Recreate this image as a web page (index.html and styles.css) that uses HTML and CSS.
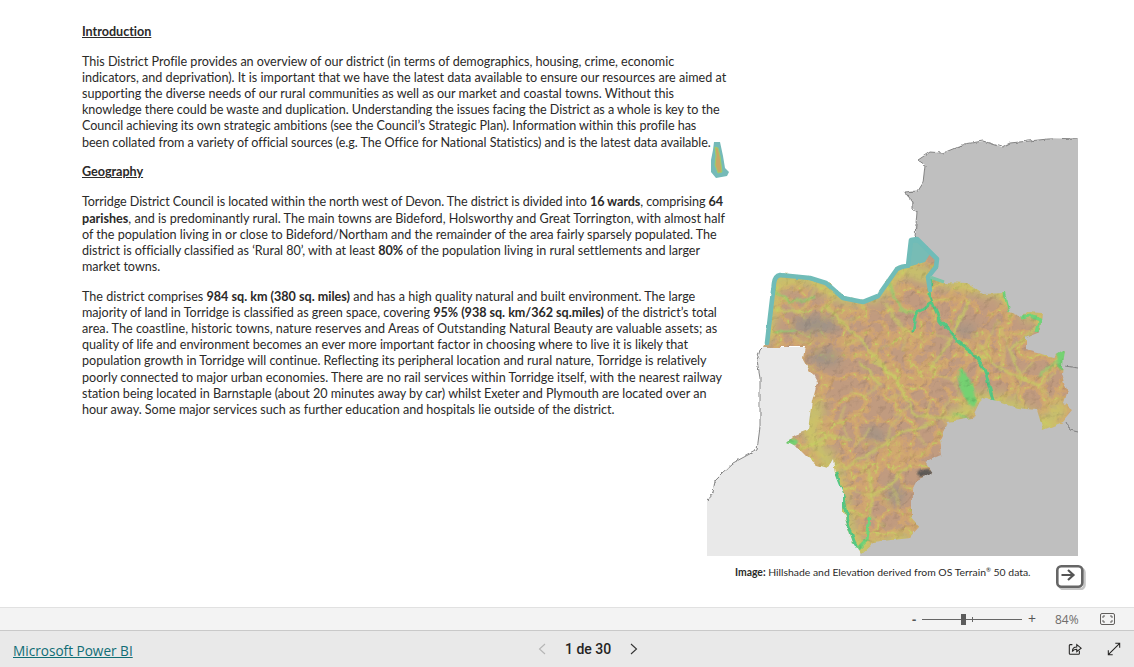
FILE: index.html
```html
<!DOCTYPE html>
<html lang="en">
<head>
<meta charset="utf-8">
<title>Torridge District Profile</title>
<link rel="stylesheet" href="styles.css">
</head>
<body>
<div class="app">
  <main class="canvas">
    <article class="copy">
      <h2 class="heading">Introduction</h2>
      <p class="para">This District Profile provides an overview of our district (in terms of demographics, housing, crime, economic<br>
      <span class="loose-sm">indicators, and deprivation). It is important that we have the latest data available to ensure our resources are aimed at</span><br>
      supporting the diverse needs of our rural communities as well as our market and coastal towns. Without this<br>
      <span class="tight">knowledge there could be waste and duplication. Understanding the issues facing the District as a whole is key to the</span><br>
      <span class="tight">Council achieving its own strategic ambitions (see the Council’s Strategic Plan). Information within this profile has</span><br>
      <span class="tight">been collated from a variety of official sources (e.g. The Office for National Statistics) and is the latest data available.</span></p>
      <h2 class="heading">Geography</h2>
      <p class="para"><span class="tight-lg">Torridge District Council is located within the north west of Devon. The district is divided into <b>16 wards</b>, comprising <b>64</b></span><br>
      <span class="loose-sm"><b>parishes</b>, and is predominantly rural. The main towns are Bideford, Holsworthy and Great Torrington, with almost half</span><br>
      of the population living in or close to Bideford/Northam and the remainder of the area fairly sparsely populated. The<br>
      district is officially classified as ‘Rural 80’, with at least <b>80%</b> of the population living in rural settlements and larger<br>
      market towns.</p>
      <p class="para"><span class="loose-sm">The district comprises <b>984 sq. km (380 sq. miles)</b> and has a high quality natural and built environment. The large</span><br>
      majority of land in Torridge is classified as green space, covering <b>95% (938 sq. km/362 sq.miles)</b> of the district’s total<br>
      <span class="loose">area. The coastline, historic towns, nature reserves and Areas of Outstanding Natural Beauty are valuable assets; as</span><br>
      quality of life and environment becomes an ever more important factor in choosing where to live it is likely that<br>
      population growth in Torridge will continue. Reflecting its peripheral location and rural nature, Torridge is relatively<br>
      <span class="loose-sm">poorly connected to major urban economies. There are no rail services within Torridge itself, with the nearest railway</span><br>
      station being located in Barnstaple (about 20 minutes away by car) whilst Exeter and Plymouth are located over an<br>
      hour away. Some major services such as further education and hospitals lie outside of the district.</p>
    </article>
    <figure class="figure">
      <svg class="map" viewBox="707 138 371 418" role="img" aria-label="Hillshade and elevation map of Torridge">
        <defs>
          <filter id="relief" x="0" y="0" width="100%" height="100%" color-interpolation-filters="sRGB">
            <feTurbulence type="fractalNoise" baseFrequency="0.12" numOctaves="4" seed="7"/>
            <feDiffuseLighting surfaceScale="1.6" diffuseConstant="1.16" lighting-color="#ffffff">
              <feDistantLight azimuth="225" elevation="62"/>
            </feDiffuseLighting>
          </filter>
          <filter id="elev" x="0" y="0" width="100%" height="100%" color-interpolation-filters="sRGB">
            <feTurbulence type="turbulence" baseFrequency="0.045" numOctaves="5" seed="12"/>
            <feColorMatrix values="0 0 0 2.5 0  0 0 0 2.5 0  0 0 0 2.5 0  0 0 0 0 1"/>
            <feComponentTransfer>
              <feFuncR type="table" tableValues="0.74 0.78 0.80 0.82 0.82 0.82 0.81 0.80 0.76"/>
              <feFuncG type="table" tableValues="0.82 0.80 0.74 0.68 0.66 0.65 0.64 0.63 0.61"/>
              <feFuncB type="table" tableValues="0.40 0.40 0.41 0.43 0.44 0.44 0.45 0.47 0.50"/>
            </feComponentTransfer>
          </filter>
          <filter id="rough" x="-5%" y="-5%" width="110%" height="110%">
            <feTurbulence type="fractalNoise" baseFrequency="0.09" numOctaves="3" seed="4" result="n"/>
            <feDisplacementMap in="SourceGraphic" in2="n" scale="6" xChannelSelector="R" yChannelSelector="G"/>
          </filter>
          <filter id="rough2" x="-5%" y="-5%" width="110%" height="110%">
            <feTurbulence type="fractalNoise" baseFrequency="0.14" numOctaves="3" seed="9" result="n"/>
            <feDisplacementMap in="SourceGraphic" in2="n" scale="3.5" xChannelSelector="R" yChannelSelector="G"/>
          </filter>
          <filter id="rough3" x="-5%" y="-5%" width="110%" height="110%">
            <feTurbulence type="fractalNoise" baseFrequency="0.08" numOctaves="2" seed="3" result="n"/>
            <feDisplacementMap in="SourceGraphic" in2="n" scale="2" xChannelSelector="R" yChannelSelector="G"/>
            <feGaussianBlur stdDeviation="0.5"/>
          </filter>
          <filter id="soft"><feGaussianBlur stdDeviation="6"/></filter>
          <filter id="soft2"><feGaussianBlur stdDeviation="0.9"/></filter>
          <filter id="soft1"><feGaussianBlur stdDeviation="0.5"/></filter>
          <clipPath id="land"><path d="M765 343L770 317L773 280L778 274L810 277L827 282L843 297L863 301L877 295L897 267L908 265L911 238L917 238L930 252L938 258L937 267L930 277L943 282L967 283L983 293L1005 292L1010 313L1022 318L1027 312L1042 313L1040 332L1025 338L1025 350L1053 357L1065 350L1062 373L1067 390L1063 403L1073 410L1063 422L1043 430L1037 410L1017 408L993 400L982 397L972 418L948 422L940 438L942 455L925 462L932 473L917 480L912 490L912 517L920 527L910 538L873 542L860 554L853 543L843 513L843 493L835 473L833 460L828 468L817 465L807 457L800 450L787 443L795 435L808 430L812 400L817 382L803 357L805 347L763 347Z"/></clipPath>
        </defs>
        <path class="sea-land" d="M707 500L713 493L715 480L722 473L733 463L757 450L760 427L760 377L757 360L760 350L763 347L860 347L870 556L707 556Z"/>
        <path class="grey-land" d="M1078 138L1048 139L1010 143L1002 147L983 141L965 144L943 153L930 152L918 160L925 165L923 183L918 191L904 192L912 202L912 208L917 212L915 237L930 265L880 400L860 556L1078 556Z"/>
        <g filter="url(#rough2)">
          <path class="grey-edge" d="M1078 138L1048 139L1010 143L1002 147L983 141L965 144L943 153L930 152L918 160L925 165L923 183L918 191L904 192L912 202L912 208L917 212L915 237L928 250"/>
          <path class="grey-edge" d="M707 500L713 493L715 480L722 473L733 463L757 450L760 427L760 377L757 360L760 350L763 347"/>
          <path class="grey-edge" d="M1065 366L1078 368M1066 422L1070 430L1078 432"/>
        </g>
        <g filter="url(#rough)">
          <g clip-path="url(#land)">
            <rect x="707" y="230" width="371" height="330" filter="url(#elev)"/>
            <g filter="url(#soft)">
              <path class="edge-y" d="M765 343L773 280L810 277L843 297L877 295L900 267L930 277L967 283L1005 292L1040 320M1063 403L1043 430L1017 408L982 397L948 422M820 400L808 430L835 473L843 513L860 554L910 538"/>
              <ellipse class="rock" cx="815" cy="325" rx="24" ry="9"/>
              <ellipse class="rock" cx="825" cy="358" rx="16" ry="8"/>
              <ellipse class="rock" cx="875" cy="435" rx="12" ry="6"/>
              <ellipse class="rock" cx="895" cy="495" rx="8" ry="11"/>
              <ellipse class="rock" cx="965" cy="330" rx="12" ry="5"/>
            </g>
            <g filter="url(#soft2)">
              <path class="val-y" d="M873 360L897 380L910 407L917 417L953 418L968 412M825 305L860 340L897 380M860 362L880 385M980 345L1000 370L1040 385M775 310L800 312M843 470L870 453L900 433L933 423M873 497L890 483L910 465M870 517L873 497L868 470M885 305L905 330M970 300L950 340L930 370M1040 325L1010 350L1020 375M800 450L830 435L850 440"/>
              <path class="val-fine" d="M897 380L885 372M905 395L890 398M910 407L895 415M925 418L930 400M940 418L950 398M860 340L845 345M875 352L890 345M842 322L860 318M880 385L865 395L850 392M850 440L840 420L845 405M855 445L870 430M885 440L900 415M915 430L925 445M870 453L860 475M890 483L900 505M873 497L855 490M870 517L885 525M870 517L852 515M1000 370L1005 345M1020 380L1015 400M1040 385L1050 400M1040 385L1055 372M1010 350L1000 330M1020 375L1035 362M950 340L960 315M950 340L935 335M975 360L1000 320M905 330L905 350M905 330L925 340M790 305L805 320M800 312L815 290M790 335L810 345M820 310L835 300M925 300L950 300M960 400L955 380L935 375"/>
              <path class="val-g" d="M775 332L795 330M775 290L790 302L815 297M890 285L900 310L917 313M1058 360L1040 375M970 420L955 415"/>
              <ellipse class="val-gf" cx="967" cy="388" rx="6" ry="20" transform="rotate(-22 967 388)"/>
              <ellipse class="val-gf" cx="790" cy="443" rx="7" ry="4"/>
              <ellipse class="val-gf" cx="1062" cy="358" rx="5" ry="11"/>
            </g>
            <g filter="url(#soft1)">
              <path class="river" d="M930 277L929 295L940 320L957 340L972 352L982 365L987 378L993 400M930 303L917 313L913 330M837 473L843 497L847 520L857 550"/>
              <path class="river-thin" d="M870 517L867 540L857 550M1005 292L1010 313M1022 318L1030 316L1040 320L1037 332"/>
            </g>
            <ellipse class="dark" cx="925" cy="473" rx="8" ry="4" filter="url(#soft2)" transform="rotate(-12 925 473)"/>
            <rect class="texture" x="707" y="230" width="371" height="330" filter="url(#relief)"/>
          </g>
        </g>
        <g filter="url(#rough3)">
          <path class="estuary" d="M911 240L918 240L930 254L925 262L908 267Z"/>
          <path class="coast" d="M767 343L770 317L774 283Q775 276 780 275L810 278L826 283L843 298L863 302L878 296L897 269Q902 266 908 266L911 240L917 239L930 252L937 259L936 267L928 277L930 290"/>
          <path class="coast-thin" d="M930 277L944 282"/>
        </g>
        <g filter="url(#soft1)">
          <path class="island-halo" d="M714 142L720 142L723 156L725 168L729 172L727 176L716 178L711 172L711 160L713 150Z"/>
          <path class="island-land" d="M715 147L718 148L720 156L722 172L718 173L715 165L716 156Z"/>
        </g>
      </svg>
      <figcaption class="caption">
        <span class="caption-text"><b>Image:</b> Hillshade and Elevation derived from OS Terrain<sup class="reg">®</sup> 50 data.</span>
        <span class="next-btn">
          <svg viewBox="0 0 30 25" class="next-svg"><rect class="btn-shadow" x="3.500" y="3.500" width="25" height="20.500" rx="4"/><rect class="btn-main" x="1.300" y="1.300" width="25" height="20.500" rx="4"/><path class="btn-arrow" d="M5.500 10H17M12 5L17.500 10L12 15"/></svg>
        </span>
      </figcaption>
    </figure>
  </main>
  <div class="zoombar">
    <span class="zoom-sign zoom-minus">-</span>
    <span class="slider"><span class="tick"></span><span class="thumb"></span></span>
    <span class="zoom-sign zoom-plus">+</span>
    <span class="zoom-val">84%</span>
    <svg class="fit" viewBox="0 0 15 12"><rect class="fit-box" x="0.500" y="0.500" width="14" height="11" rx="1.500"/><path class="fit-marks" d="M3 5V3H5M10 3H12V5M12 7V9H10M5 9H3V7"/></svg>
  </div>
  <footer class="footer">
    <a class="brand" href="#">Microsoft Power BI</a>
    <nav class="pager">
      <svg class="chev chev-off" viewBox="0 0 8 12"><path d="M7 1L1.500 6L7 11"/></svg>
      <span class="page-num">1 de 30</span>
      <svg class="chev" viewBox="0 0 8 12"><path d="M1 1L6.500 6L1 11"/></svg>
    </nav>
    <div class="actions">
      <svg class="act" viewBox="0 0 16 16"><path class="act-line" d="M5 3H2.500A1 1 0 0 0 1.500 4V13A1 1 0 0 0 2.500 14H12A1 1 0 0 0 13 13V10"/><path class="act-line" d="M5 11C5 7.500 7.500 5.800 10 5.800V3L15 7L10 11V8.300C8 8.300 6 9 5 11Z"/></svg>
      <svg class="act" viewBox="0 0 16 16"><path class="act-line" d="M9.500 1.500H14.500V6.500M14.500 1.500L1.500 14.500M1.500 9.500V14.500H6.500"/></svg>
    </div>
  </footer>
</div>
</body>
</html>
```
FILE: styles.css
```css
* { box-sizing: border-box; }
html, body { margin: 0; height: 100%; }
body { font-family: "Lato", "Open Sans", sans-serif; color: #2b2a29; background: #fff; overflow: hidden; }
.app { width: 1134px; height: 667px; display: flex; flex-direction: column; }

.canvas { flex: 1; min-height: 0; display: grid; grid-template-columns: 82px 625px 30px 349px 1fr; grid-template-rows: 1fr; background: #fff; }
.copy { grid-column: 2 / 4; grid-row: 1; padding-top: 24px; font-size: 12.6px; line-height: 16.14px; white-space: nowrap; letter-spacing: -0.025px; }
.heading { margin: 0 0 13.75px; font-size: 12.6px; line-height: 16.14px; font-weight: 700; text-decoration: underline; color: #2b2a29; }
.para { margin: 0 0 13.75px; color: #2b2a29; }
.para b { font-weight: 700; }
.tight { letter-spacing: -0.055px; }
.tight-lg { letter-spacing: -0.09px; }
.loose-sm { letter-spacing: 0; }
.loose { letter-spacing: 0.035px; }

.figure { grid-column: 3 / 5; grid-row: 1; margin: 138px 0 0; display: flex; flex-direction: column; z-index: 1; }
.map { width: 371px; height: 418px; display: block; flex: none; }
.sea-land { fill: #e9e9e9; }
.grey-land { fill: #bfbfbf; }
.grey-edge { fill: none; stroke: #7a7a7a; stroke-width: 0.9; stroke-linejoin: round; }
.edge-y { fill: none; stroke: #c9cc66; stroke-width: 12; }
.rock { fill: #938f8a; opacity: 0.85; }
.val-y { fill: none; stroke: #c6cf63; stroke-width: 2; stroke-linecap: round; }
.val-fine { fill: none; stroke: #cccb68; stroke-width: 1.2; stroke-linecap: round; }
.val-g { fill: none; stroke: #8ed46e; stroke-width: 2; stroke-linecap: round; }
.val-gf { fill: #74d272; }
.river { fill: none; stroke: #55c884; stroke-width: 3; stroke-linecap: round; stroke-linejoin: round; }
.river-thin { fill: none; stroke: #70d47a; stroke-width: 3; }
.dark { fill: #5f5b58; }
.texture { mix-blend-mode: multiply; opacity: 0.36; }
.estuary { fill: #77bcb5; }
.coast { fill: none; stroke: #6fbcb8; stroke-width: 4.6; stroke-linejoin: round; stroke-linecap: round; }
.coast-thin { fill: none; stroke: #7cc5a8; stroke-width: 3; }
.island-halo { fill: #74bab8; }
.island-land { fill: #c9a765; stroke: #9ccf6b; stroke-width: 1; }

.caption { display: flex; align-items: flex-start; padding: 7px 0 0 28px; height: 32px; }
.caption-text { font-size: 10.4px; color: #2b2a29; white-space: nowrap; width: 321px; line-height: 18px; }
.reg { font-size: 6px; line-height: 0; }
.next-btn { display: block; flex: none; width: 30px; height: 25px; margin-top: 2px; }
.next-svg { display: block; width: 30px; height: 25px; }
.btn-shadow { fill: none; stroke: #c6c6c6; stroke-width: 2.6; }
.btn-main { fill: #fff; stroke: #666; stroke-width: 2.6; }
.btn-arrow { fill: none; stroke: #555; stroke-width: 2.2; }

.zoombar { flex: none; height: 23px; background: #f3f3f3; border-top: 1px solid #e1e1e1; display: flex; align-items: center; padding-left: 912px; color: #605e5c; }
.zoom-sign { font-family: "Open Sans", sans-serif; font-size: 13px; color: #555; width: 10px; line-height: 1; }
.zoom-minus { width: 10px; font-weight: 700; }
.zoom-plus { margin-left: 6px; font-size: 14px; }
.slider { position: relative; display: block; width: 100px; height: 1px; background: #666; }
.thumb { position: absolute; left: 39px; top: -5px; width: 5px; height: 11px; background: #5c5c5c; }
.tick { position: absolute; left: 50px; top: -2px; width: 1px; height: 5px; background: #666; }
.zoom-val { font-family: "Open Sans", sans-serif; font-size: 12px; color: #6f6d6b; margin-left: 17px; width: 45px; }
.fit { width: 15px; height: 12px; flex: none; }
.fit-box { fill: none; stroke: #605e5c; }
.fit-marks { fill: none; stroke: #605e5c; }

.footer { flex: none; height: 37px; background: #e9e9e9; border-top: 1px solid #c9c9c9; display: grid; grid-template-columns: 525px auto 1fr; align-items: center; padding: 2px 13px 0; font-family: "Open Sans", sans-serif; }
.brand { justify-self: start; font-size: 13.6px; color: #106d75; text-decoration: underline; }
.pager { display: flex; align-items: center; gap: 19px; margin-top: -2px; }
.page-num { font-family: "Roboto", sans-serif; font-size: 14px; font-weight: 500; color: #252423; }
.chev { width: 8px; height: 12px; }
.chev path { fill: none; stroke: #333; stroke-width: 1.1; }
.chev-off path { stroke: #b5b5b5; }
.actions { justify-self: end; display: flex; gap: 25px; margin-top: -2px; }
.act { width: 14px; height: 14px; display: block; }
.act-line { fill: none; stroke: #252423; stroke-width: 1.2; }
```
